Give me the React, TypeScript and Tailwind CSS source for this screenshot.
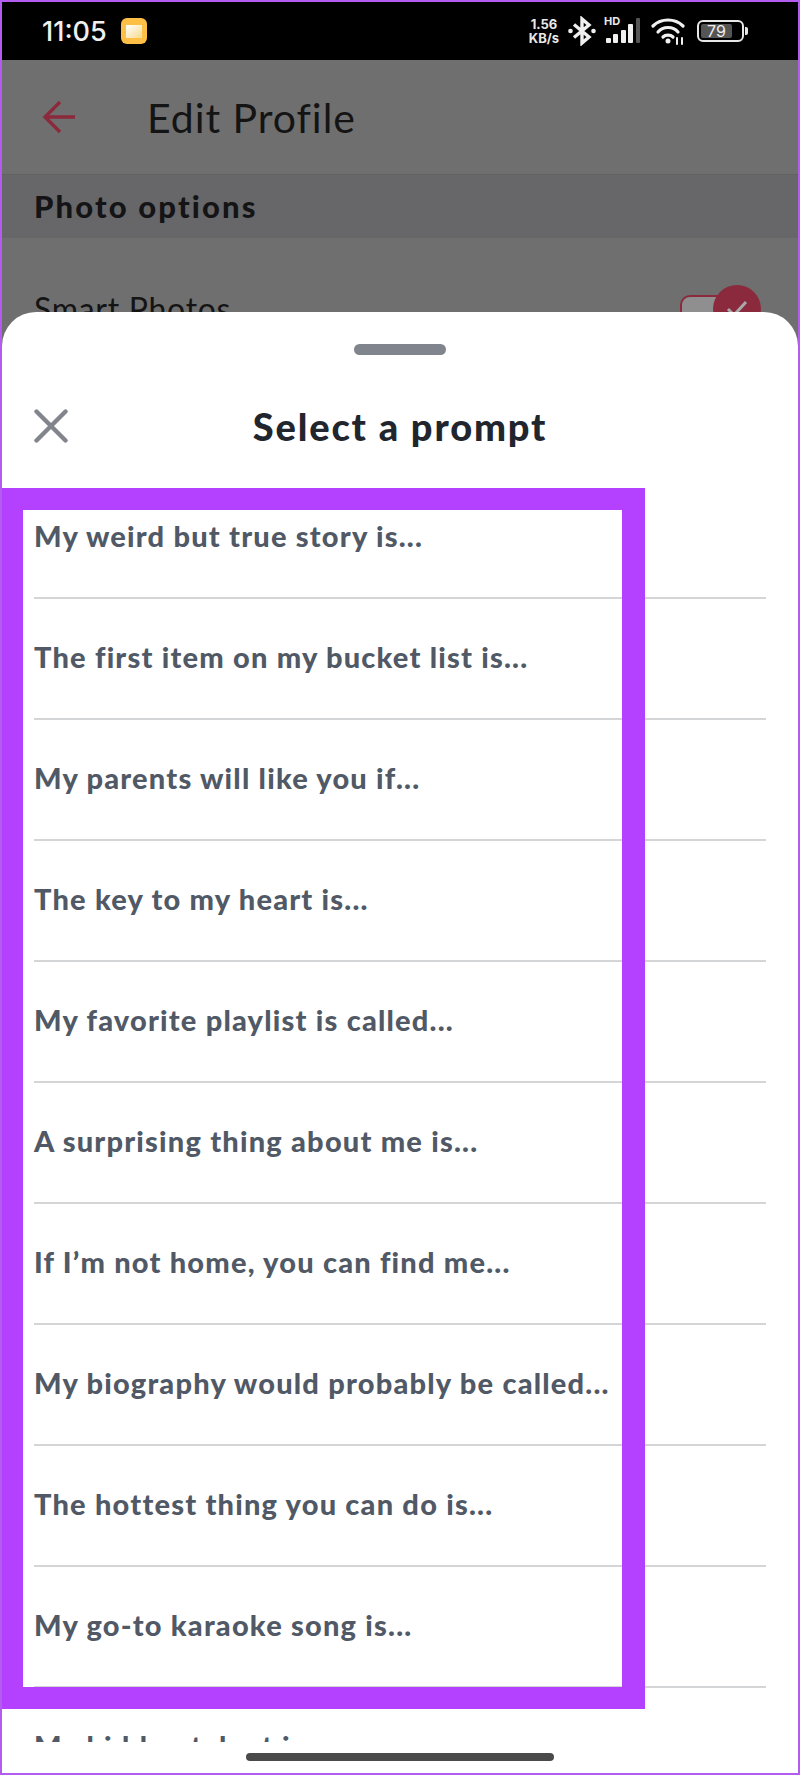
const prompts = [
  "My weird but true story is...",
  "The first item on my bucket list is...",
  "My parents will like you if...",
  "The key to my heart is...",
  "My favorite playlist is called...",
  "A surprising thing about me is...",
  "If I’m not home, you can find me...",
  "My biography would probably be called...",
  "The hottest thing you can do is...",
  "My go-to karaoke song is...",
  "My hidden talent is...",
];

function StatusIcons() {
  return (
    <div className="flex items-center">
      <div className="flex w-[36px] flex-col items-center font-['Inter',sans-serif] text-[13px] font-bold leading-[14px] text-[#e8e8e8]">
        <span>1.56</span>
        <span>KB/s</span>
      </div>
      <svg className="ml-[6px]" width="28" height="30" viewBox="0 0 28 30" fill="none" stroke="#f0f0f0" strokeWidth="3.4">
        <path d="M6 8.5 L21 21 L14 27 V3 L21 9 L6 21.5" />
        <circle cx="2.5" cy="15" r="2.3" fill="#f0f0f0" stroke="none" />
        <circle cx="25.5" cy="15" r="2.3" fill="#f0f0f0" stroke="none" />
      </svg>
      <div className="relative ml-[8px] h-[26px] w-[36px]">
        <span className="absolute left-0 top-[-2px] font-['Inter',sans-serif] text-[11px] font-bold leading-[11px] text-[#e8e8e8]">HD</span>
        <svg className="absolute left-0 top-0" width="36" height="26" viewBox="0 0 36 26">
          <rect x="2" y="20" width="5" height="5" rx="1" fill="#f0f0f0" />
          <rect x="9" y="16" width="5" height="9" rx="1" fill="#f0f0f0" />
          <rect x="17" y="12" width="5" height="13" rx="1" fill="#f0f0f0" />
          <rect x="24" y="6" width="5" height="19" rx="1" fill="#f0f0f0" />
          <rect x="32" y="0" width="4" height="25" rx="1" fill="#555" />
        </svg>
      </div>
      <svg className="ml-[11px]" width="34" height="28" viewBox="0 0 34 28" fill="none" stroke="#f0f0f0" strokeWidth="3.2" strokeLinecap="round">
        <path d="M2 9 C10 1 24 1 32 9" />
        <path d="M7 15 C12 9 22 9 27 15" />
        <path d="M12 20 C14.5 17.5 19.5 17.5 22 20" />
        <circle cx="17" cy="24" r="2.5" fill="#f0f0f0" stroke="none" />
        <path d="M26 21 V27 M31 21 V27" strokeWidth="2" />
      </svg>
      <div className="ml-[12px] flex items-center">
        <div className="flex h-[22px] w-[47px] items-center rounded-[6px] border-2 border-[#e8e8e8] p-[2px]">
          <div className="flex h-full w-[31px] items-center justify-center rounded-[2px] bg-[#555]">
            <span className="font-['Inter',sans-serif] text-[16px] leading-none text-[#eee]">79</span>
          </div>
        </div>
        <div className="ml-[1px] h-[8px] w-[3px] rounded-r-[2px] bg-[#e8e8e8]" />
      </div>
    </div>
  );
}

function CloseIcon() {
  return (
    <svg width="34" height="34" viewBox="0 0 34 34" fill="none" stroke="#82858c" strokeWidth="4.4" strokeLinecap="round">
      <path d="M2.5 2.5 L31.5 31.5 M31.5 2.5 L2.5 31.5" />
    </svg>
  );
}

export default function App() {
  return (
    <div className="relative h-[1775px] w-[800px] overflow-hidden border-2 border-[#b35cf0] bg-[#6f6f6f] font-['Lato',sans-serif]">
      <div className="flex h-[58px] items-center justify-between bg-black pl-[40px] pr-[50px]">
        <div className="flex items-center gap-[14px]">
          <span className="font-['Inter',sans-serif] text-[27px] font-medium leading-none text-[#efefef]">11:05</span>
          <div className="flex h-[26px] w-[26px] items-center justify-center rounded-[6px] bg-[#fdbf45]">
            <div className="h-[13px] w-[16px] bg-gradient-to-br from-[#ffffff] to-[#f6d98a]" />
          </div>
        </div>
        <StatusIcons />
      </div>

      <div className="flex h-[115px] items-center border-b border-[#626262] pl-[40px]">
        <svg width="34" height="34" viewBox="0 0 34 34" fill="none" stroke="#8b2a3d" strokeWidth="3.4">
          <path d="M33 17 H3 M18 2 L3 17 L18 32" />
        </svg>
        <span className="ml-[71px] text-[41px] leading-none tracking-[0.95px] text-[#141414]">Edit Profile</span>
      </div>

      <div className="flex h-[63px] items-center bg-[#676769] pl-[32px]">
        <span className="text-[31px] font-black leading-none tracking-[2.15px] text-[#141416]">Photo options</span>
      </div>

      <div className="mt-[46px] flex h-[50px] items-center justify-between pl-[32px] pr-[58px]">
        <span className="text-[32px] leading-none tracking-[0.7px] text-[#141414]">Smart Photos</span>
        <div className="relative h-[26px] w-[60px]">
          <div className="absolute left-0 top-[-1px] h-[28px] w-[50px] rounded-[10px] border-2 border-[#8b2a3d] bg-[#8f8f8f]" />
          <div className="absolute left-[33px] top-[-11px] flex h-[48px] w-[48px] items-center justify-center rounded-full bg-[#8b2a3d]">
            <svg width="24" height="20" viewBox="0 0 24 20" fill="none" stroke="#a9a9a9" strokeWidth="3">
              <path d="M3 10 L9 16 L21 3" />
            </svg>
          </div>
        </div>
      </div>

      <div className="absolute bottom-0 left-0 right-0 top-[310px] flex flex-col rounded-t-[34px] bg-white">
        <div className="flex justify-center pt-[32px]">
          <div className="h-[11px] w-[92px] rounded-full bg-[#7f848d]" />
        </div>
        <div className="relative mt-[47px] flex h-[48px] items-center justify-center">
          <div className="absolute left-[32px] top-[7px]">
            <CloseIcon />
          </div>
          <span className="text-[38px] font-black leading-none tracking-[1.85px] text-[#21262e]">Select a prompt</span>
        </div>
        <div className="mt-[28px] h-[1264px] overflow-hidden px-[32px]">
          {prompts.map((p) => (
            <div key={p} className="flex h-[121px] shrink-0 items-center border-b-2 border-[#d4d5d6] pb-[4px]">
              <span className="text-[29px] font-black leading-none tracking-[1.2px] text-[#505965]">{p}</span>
            </div>
          ))}
        </div>
        <div className="flex flex-1 justify-center pt-[11px]">
          <div className="h-[8px] w-[308px] rounded-full bg-[#4a4a4a]" />
        </div>
      </div>

      <div className="absolute left-[-2px] top-[486px] h-[1221px] w-[645px] border-x-[23px] border-y-[22px] border-[#b341ff]" />
    </div>
  );
}
